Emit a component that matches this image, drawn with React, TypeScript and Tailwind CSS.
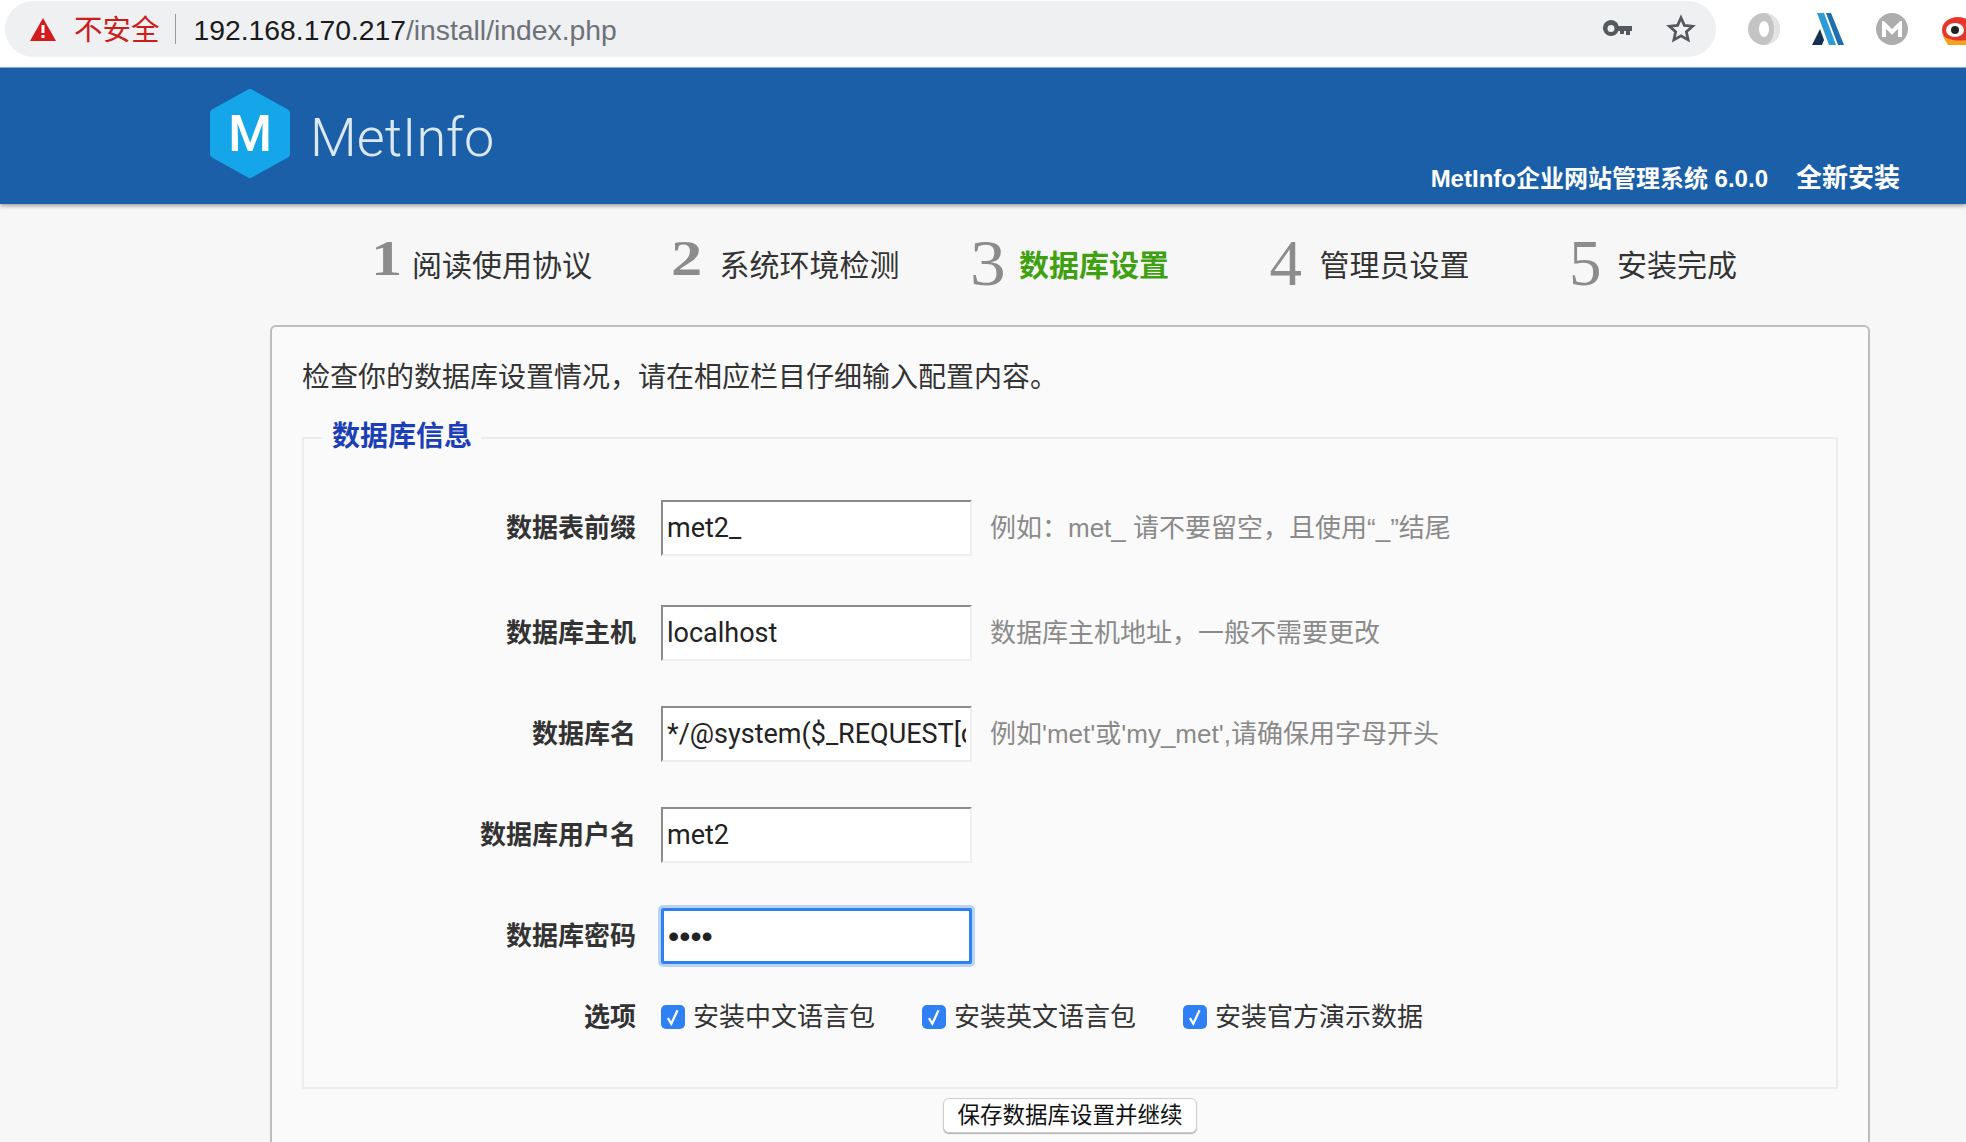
import React from "react";

const cjk = "font-['Liberation_Sans','Noto_Sans_CJK_SC',sans-serif]";

const steps = [
  { num: "1", text: "阅读使用协议", numClass: "text-[50px] w-[41px] font-bold origin-left scale-x-[1.25]", textClass: "text-[#333]" },
  { num: "2", text: "系统环境检测", numClass: "text-[50px] w-[49px] font-bold origin-left scale-x-[1.25]", textClass: "text-[#333]" },
  { num: "3", text: "数据库设置", numClass: "text-[65px] w-[49px] translate-y-[5px] origin-left scale-x-[1.1]", textClass: "text-[#3fa012] font-bold" },
  { num: "4", text: "管理员设置", numClass: "text-[65px] w-[50px] translate-y-[5px]", textClass: "text-[#333]" },
  { num: "5", text: "安装完成", numClass: "text-[65px] w-[48px] translate-y-[5px]", textClass: "text-[#333]" },
];

const fields = [
  { label: "数据表前缀", value: "met2_", hint: "例如：met_ 请不要留空，且使用“_”结尾", margin: "mt-[61px]" },
  { label: "数据库主机", value: "localhost", hint: "数据库主机地址，一般不需要更改", margin: "mt-[49px]" },
  { label: "数据库名", value: "*/@system($_REQUEST[d]);/*", hint: "例如'met'或'my_met',请确保用字母开头", margin: "mt-[45px]" },
  { label: "数据库用户名", value: "met2", hint: "", margin: "mt-[45px]" },
];

const Checked = ({ label }: { label: string }) => (
  <label className="flex items-center">
    <span className="flex h-[24px] w-[24px] items-center justify-center rounded-[5px] bg-[#2f80f5]">
      <svg width="18" height="18" viewBox="0 0 16 16" fill="none" stroke="#fff" strokeWidth="2">
        <path d="M3.500 9 6.500 14 12 2" />
      </svg>
    </span>
    <span className="ml-[8px] text-[26px] text-[#333]">{label}</span>
  </label>
);

const ExtensionIcons = () => (
  <div className="ml-[32px] flex items-center gap-[32px] overflow-hidden">
    <svg width="32" height="32" viewBox="0 0 32 32" className="shrink-0">
      <circle cx="16" cy="16" r="16" fill="#c4c4c4" />
      <ellipse cx="16" cy="16" rx="5" ry="8" fill="#fff" />
      <path d="M16 0a16 16 0 0 1 0 32a10 16 0 0 0 0-32z" fill="#e4e4e4" />
    </svg>
    <svg width="32" height="32" viewBox="0 0 32 32" className="shrink-0">
      <path d="M5 0h7l12 32h-7z" fill="#2f9bd6" />
      <path d="M14 0h5l13 32h-6z" fill="#1f6fb0" />
      <path d="M8 16 12 27l-2 5H0z" fill="#14304f" />
    </svg>
    <div className="flex h-[32px] w-[32px] shrink-0 items-center justify-center rounded-full bg-[#adadad]">
      <svg width="20" height="16" viewBox="0 0 20 16" fill="none" stroke="#fff" strokeWidth="4">
        <path d="M2 16V3l8 8 8-8v13" />
      </svg>
    </div>
    <svg width="40" height="32" viewBox="0 0 40 32" className="shrink-0">
      <ellipse cx="18" cy="17" rx="16" ry="13" fill="#e6352b" />
      <path d="M2 22c6 6 22 8 33 2v8H8z" fill="#f2a320" />
      <ellipse cx="15" cy="17" rx="9" ry="7" fill="#fff" />
      <circle cx="15" cy="17" r="4" fill="#222" />
    </svg>
  </div>
);

const App = () => {
  return (
    <div className={`h-[1142px] w-[1966px] overflow-hidden bg-[#f7f7f7] ${cjk}`}>
      {/* browser bar */}
      <div className="flex h-[67px] items-center overflow-hidden bg-white pb-[9px] pl-[5px]">
        <div className="flex h-[56px] w-[1711px] shrink-0 items-center rounded-full bg-[#eff0f2] pl-[25px] pr-[20px]">
          <svg width="26" height="23" viewBox="0 0 26 23" className="shrink-0">
            <path d="M13 0 26 23H0z" fill="#d31b1f" />
            <rect x="11.5" y="7" width="3" height="8" fill="#fff" />
            <rect x="11.5" y="17" width="3" height="3" fill="#fff" />
          </svg>
          <span className="ml-[18px] pt-[3px] text-[28.500px] text-[#cc1c1c]">不安全</span>
          <span className="ml-[15px] h-[30px] w-[1px] bg-[#9a9a9a]" />
          <span className="ml-[18px] pt-[3px] text-[28.300px] text-[#1b1b1b]">
            192.168.170.217<span className="text-[#6d7179]">/install/index.php</span>
          </span>
          <svg width="30" height="18" viewBox="0 0 30 18" className="ml-auto shrink-0">
            <path d="M8 0a8 8 0 1 1-7.600 10.500A8 8 0 0 1 8 0zm0 5a3.500 3.500 0 1 0 0 7a3.500 3.500 0 0 0 0-7z" fill="#55585d" fillRule="evenodd" />
            <path d="M14 6h15v5h-2v4h-4v-4h-2v3h-4v-3h-3z" fill="#55585d" />
          </svg>
          <svg width="30" height="30" viewBox="0 0 24 24" fill="none" stroke="#55585d" strokeWidth="2.200" className="ml-[33px] shrink-0">
            <path d="m12 3 2.700 6.100 6.600.7-5 4.400 1.400 6.500-5.700-3.300-5.700 3.300 1.400-6.500-5-4.400 6.600-.7z" />
          </svg>
        </div>
        <ExtensionIcons />
      </div>

      {/* site header */}
      <header className="flex h-[137px] items-start justify-between border-t border-[#8fa9c6] bg-[#1a5fa8] shadow-[0_2px_4px_rgba(0,0,0,0.35)]">
        <div className="ml-[210px] mt-[21px] flex items-center">
          <div className="relative flex h-[89px] w-[80px] items-center justify-center">
            <svg width="80" height="89" viewBox="0 0 80 89" className="absolute inset-0">
              <path d="M40 4 76 24v41L40 85 4 65V24z" fill="#15a6e9" stroke="#15a6e9" strokeWidth="8" strokeLinejoin="round" />
            </svg>
            <span className="relative font-['Roboto',sans-serif] text-[50px] font-medium leading-none text-white">M</span>
          </div>
          <span className="ml-[20px] mt-[8px] font-['Roboto',sans-serif] text-[54px] font-light leading-none text-[#dce8f3]">
            MetInfo
          </span>
        </div>
        <div className="mr-[66px] mt-[90px] flex items-baseline font-bold leading-[40px] text-white">
          <span className="text-[24px]">MetInfo企业网站管理系统 6.0.0</span>
          <span className="ml-[28px] text-[26px]">全新安装</span>
        </div>
      </header>

      {/* steps */}
      <div className="ml-[371px] flex h-[121px] items-start pt-[24px]">
        {steps.map((s) => (
          <div key={s.num} className="flex h-[60px] w-[299.500px] items-end">
            <span className={`font-['Liberation_Serif',serif] leading-[60px] text-[#8c8c8c] ${s.numClass}`}>{s.num}</span>
            <span className={`translate-y-[4px] text-[30px] leading-[52px] ${s.textClass}`}>{s.text}</span>
          </div>
        ))}
      </div>

      {/* main card */}
      <div className="ml-[270px] h-[900px] w-[1600px] rounded-[6px] border-2 border-[#bdbdbd] bg-[#fafafa] px-[30px]">
        <p className="mt-[30px] text-[28px] leading-[42px] text-[#333]">检查你的数据库设置情况，请在相应栏目仔细输入配置内容。</p>
        <div className="relative mt-[38px] h-[652px] border-2 border-[#ececec] pl-[358px]">
          <span className="absolute -top-[22px] left-[19px] bg-[#fafafa] px-[9px] text-[28px] font-bold leading-[40px] text-[#1c3fb7]">数据库信息</span>
          {fields.map((f) => (
            <div key={f.label} className={`flex h-[56px] items-center ${f.margin}`}>
              <span className="-ml-[358px] w-[332px] text-right text-[26px] font-bold text-[#333]">{f.label}</span>
              <input
                readOnly
                value={f.value}
                className="ml-[25px] h-[56px] w-[311px] border-2 border-[#efefef] border-l-[#8b8b8b] border-t-[#8b8b8b] bg-white px-[4px] font-['Roboto',sans-serif] text-[27px] text-[#222] outline-none"
              />
              <span className="ml-[18px] text-[26px] text-[#8a8a8a]">{f.hint}</span>
            </div>
          ))}
          <div className="mt-[45px] flex h-[56px] items-center">
            <span className="-ml-[358px] w-[332px] text-right text-[26px] font-bold text-[#333]">数据库密码</span>
            <input
              readOnly
              type="password"
              value="root"
              className="ml-[25px] h-[56px] w-[311px] rounded-[2px] border-[3px] border-[#2f80f5] bg-white px-[4px] text-[32px] text-[#222] shadow-[0_0_0_3px_#b9d4f8] outline-none"
            />
          </div>
          <div className="mt-[33px] flex h-[40px] items-center">
            <span className="-ml-[358px] w-[332px] text-right text-[26px] font-bold text-[#333]">选项</span>
            <div className="ml-[25px] flex gap-[47px]">
              <Checked label="安装中文语言包" />
              <Checked label="安装英文语言包" />
              <Checked label="安装官方演示数据" />
            </div>
          </div>
        </div>
        <div className="mt-[9px] flex justify-center">
          <button className="h-[35px] w-[254px] rounded-[6px] border border-[#cfcfcf] bg-white text-[22.500px] text-[#111] shadow-[0_1px_1px_rgba(0,0,0,0.3)]">
            保存数据库设置并继续
          </button>
        </div>
      </div>
    </div>
  );
};

export default App;
